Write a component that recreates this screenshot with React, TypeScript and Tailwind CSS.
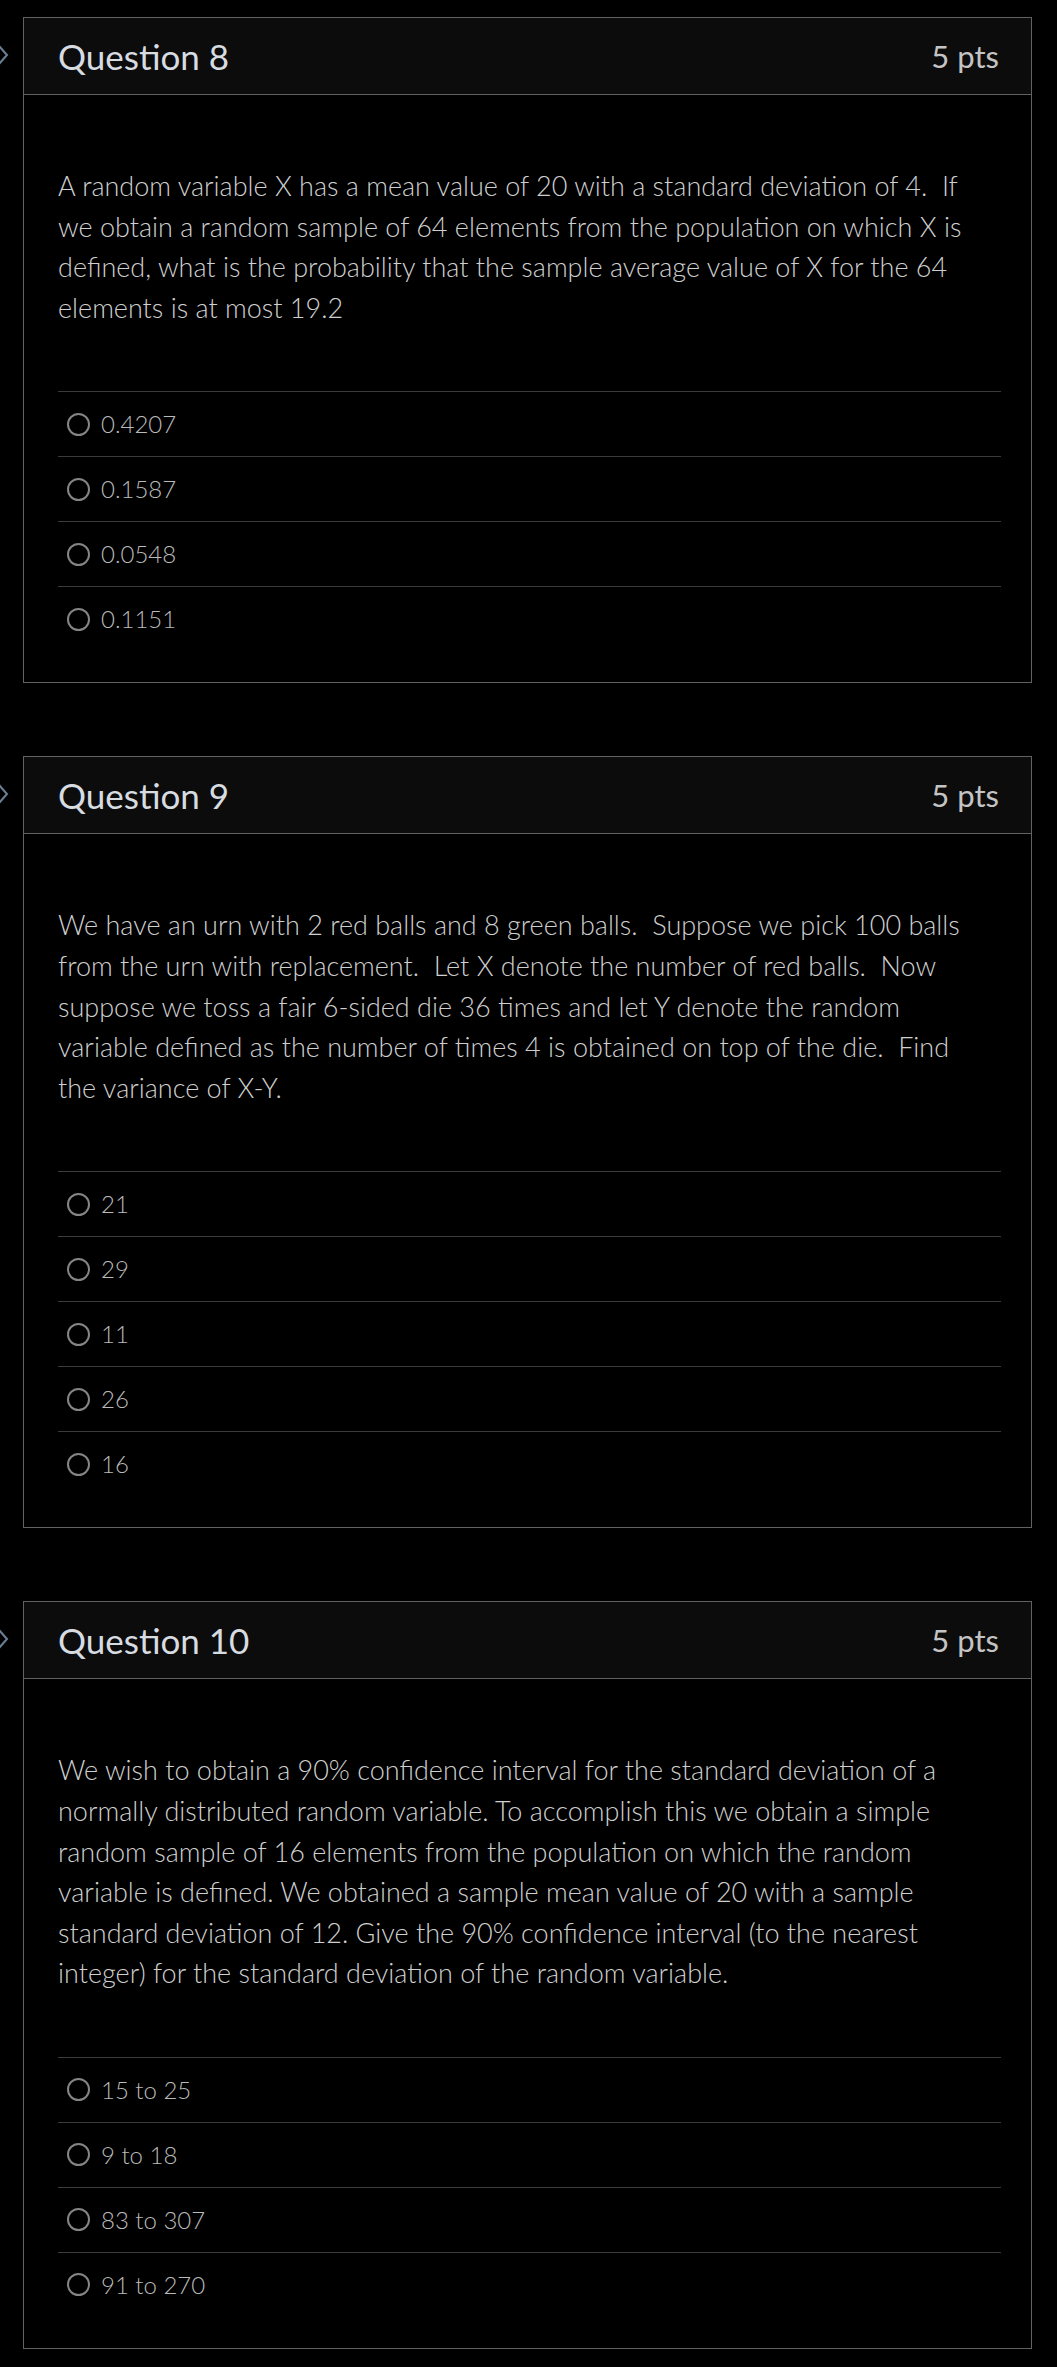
import React from "react";

type Question = {
  id: number;
  points: number;
  text: string;
  answers: string[];
};

const questions: Question[] = [
  {
    id: 8,
    points: 5,
    text: "A random variable X has a mean value of 20 with a standard deviation of 4.\u00a0 If we obtain a random sample of 64 elements from the population on which X is defined, what is the probability that the sample average value of X for the 64 elements is at most 19.2",
    answers: ["0.4207", "0.1587", "0.0548", "0.1151"],
  },
  {
    id: 9,
    points: 5,
    text: "We have an urn with 2 red balls and 8 green balls.\u00a0 Suppose we pick 100 balls from the urn with replacement.\u00a0 Let X denote the number of red balls.\u00a0 Now suppose we toss a fair 6-sided die 36 times and let Y denote the random variable defined as the number of times 4 is obtained on top of the die.\u00a0 Find the variance of X-Y.",
    answers: ["21", "29", "11", "26", "16"],
  },
  {
    id: 10,
    points: 5,
    text: "We wish to obtain a 90% confidence interval for the standard deviation of a normally distributed random variable. To accomplish this we obtain a simple random sample of 16 elements from the population on which the random variable is defined. We obtained a sample mean value of 20 with a sample standard deviation of 12. Give the 90% confidence interval (to the nearest integer) for the standard deviation of the random variable.",
    answers: ["15 to 25", "9 to 18", "83 to 307", "91 to 270"],
  },
];

function QuestionCard({ q }: { q: Question }) {
  return (
    <div className="relative border border-[#626262] bg-black">
      {/* flag chevron peeking in from the page edge */}
      <svg
        className="absolute left-[-27px] top-[26px]"
        width="12"
        height="22"
        viewBox="0 0 12 22"
        fill="none"
      >
        <path d="M2 2L10 11L2 20" stroke="#6b7f93" strokeWidth="2" />
      </svg>

      <div className="flex h-[77px] items-center justify-between border-b border-[#626262] bg-[#0c0c0c] pr-[32px] pl-[34px]">
        <h2 className="text-[35px] font-normal text-[#d7dce1]">Question {q.id}</h2>
        <span className="text-[31px] text-[#c4c4c4]">{q.points} pts</span>
      </div>

      <div className="px-[34px] pt-[71px] pb-[31px]">
        <p className="mb-[63px] max-w-[930px] text-[27px] font-light leading-[40.6px] text-[#cfcfcf]">
          {q.text}
        </p>
        <div className="mr-[-4px] flex flex-col">
          {q.answers.map((a) => (
            <label
              key={a}
              className="flex h-[65px] items-center gap-[11px] border-t border-[#3b3b3b] pl-[9px]"
            >
              <span className="h-[23px] w-[23px] shrink-0 rounded-full border-2 border-[#858585]" />
              <span className="text-[24px] font-light text-[#bababa]">{a}</span>
            </label>
          ))}
        </div>
      </div>
    </div>
  );
}

export default function App() {
  return (
    <div
      className="min-h-[2367px] overflow-hidden bg-black pt-[17px] pr-[25px] pl-[23px]"
      style={{ fontFamily: "Lato, 'Noto Sans', sans-serif" }}
    >
      <div className="flex flex-col gap-[73px]">
        {questions.map((q) => (
          <QuestionCard key={q.id} q={q} />
        ))}
      </div>
    </div>
  );
}
